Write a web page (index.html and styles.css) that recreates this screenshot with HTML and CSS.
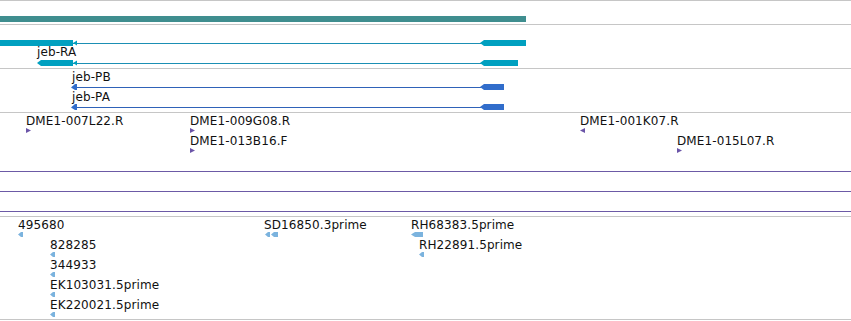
FILE: index.html
```html
<!DOCTYPE html>
<html>
<head>
    <title>jeb region</title>
    <link rel="stylesheet" href="styles.css">
</head>
<body>
    <div class="tracks">
        <!-- Gene span -->
        <div class="track track-gene">
            <svg class="glyphs" width="851" height="23">
                <rect x="0" y="15" width="526" height="6" fill="#3f8e8f"/>
            </svg>
        </div>

        <!-- Transcripts -->
        <div class="track track-tx">
            <svg class="glyphs" width="851" height="43">
                <!-- jeb-RA (upper) -->
                <rect x="0" y="15" width="73" height="6" class="tx-fill"/>
                <line x1="73" y1="18.5" x2="481" y2="18.5" class="tx-line"/>
                <polygon points="73,18 77,15.5 77,20.5" class="tx-fill"/>
                <polygon points="480,18 484,15 526,15 526,21 484,21" class="tx-fill"/>
                <!-- jeb-RA (lower) -->
                <polygon points="37,38 41,35 73,35 73,41 41,41" class="tx-fill"/>
                <line x1="73" y1="38.5" x2="481" y2="38.5" class="tx-line"/>
                <polygon points="73,38 77,35.5 77,40.5" class="tx-fill"/>
                <polygon points="480,38 484,35 518,35 518,41 484,41" class="tx-fill"/>
            </svg>
            <div class="label" style="left:37px;top:20px">jeb-RA</div>
        </div>

        <!-- Proteins -->
        <div class="track track-pep">
            <svg class="glyphs" width="851" height="43">
                <line x1="76" y1="18.5" x2="481" y2="18.5" class="pep-line"/>
                <polygon points="71,18.5 75,15 77,15 77,21 75,21" class="pep-fill"/>
                <polygon points="480,18 484,15 504,15 504,21 484,21" class="pep-fill"/>
                <line x1="76" y1="38.5" x2="481" y2="38.5" class="pep-line"/>
                <polygon points="71,38.5 75,35 77,35 77,41 75,41" class="pep-fill"/>
                <polygon points="480,38 484,35 504,35 504,41 484,41" class="pep-fill"/>
            </svg>
            <div class="label" style="left:72px;top:1px">jeb-PB</div>
            <div class="label" style="left:72px;top:21px">jeb-PA</div>
        </div>

        <!-- BAC ends -->
        <div class="track track-bac">
            <svg class="glyphs" width="851" height="103">
                <polygon points="26,15 31,17.5 26,20" class="bac-fill"/>
                <polygon points="190,15 195,17.5 190,20" class="bac-fill"/>
                <polygon points="190,35 195,37.5 190,40" class="bac-fill"/>
                <polygon points="585,15 580,17.5 585,20" class="bac-fill"/>
                <polygon points="677,35 682,37.5 677,40" class="bac-fill"/>
                <line x1="0" y1="58.5" x2="851" y2="58.5" class="bac-line"/>
                <line x1="0" y1="78.5" x2="851" y2="78.5" class="bac-line"/>
                <line x1="0" y1="98.5" x2="851" y2="98.5" class="bac-line"/>
            </svg>
            <div class="label" style="left:26px;top:1px">DME1-007L22.R</div>
            <div class="label" style="left:190px;top:1px">DME1-009G08.R</div>
            <div class="label" style="left:190px;top:21px">DME1-013B16.F</div>
            <div class="label" style="left:580px;top:1px">DME1-001K07.R</div>
            <div class="label" style="left:677px;top:21px">DME1-015L07.R</div>
        </div>

        <!-- cDNA / EST -->
        <div class="track track-est">
            <svg class="glyphs" width="851" height="102">
                <polygon points="18,17.5 21,15 23,15 23,20 21,20" class="est-fill"/>
                <polygon points="50,37.5 53,35 55,35 55,40 53,40" class="est-fill"/>
                <polygon points="50,57.5 53,55 55,55 55,60 53,60" class="est-fill"/>
                <polygon points="50,77.5 53,75 55,75 55,80 53,80" class="est-fill"/>
                <polygon points="50,97.5 53,95 55,95 55,100 53,100" class="est-fill"/>
                <polygon points="265,17.5 268,15 270,15 270,20 268,20" class="est-fill"/>
                <polygon points="271,17.5 274,15 278,15 278,20 274,20" class="est-fill"/>
                <polygon points="411,17.5 415,15 423,15 423,20 415,20" class="est-fill"/>
                <polygon points="419,37.5 422,35 424,35 424,40 422,40" class="est-fill"/>
            </svg>
            <div class="label" style="left:18px;top:1px">495680</div>
            <div class="label" style="left:50px;top:21px">828285</div>
            <div class="label" style="left:50px;top:41px">344933</div>
            <div class="label" style="left:50px;top:61px">EK103031.5prime</div>
            <div class="label" style="left:50px;top:81px">EK220021.5prime</div>
            <div class="label" style="left:264px;top:1px">SD16850.3prime</div>
            <div class="label" style="left:411px;top:1px">RH68383.5prime</div>
            <div class="label" style="left:419px;top:21px">RH22891.5prime</div>
        </div>
    </div>
</body>
</html>
```

FILE: styles.css
```css
:root {
    --rule: #c6c6c6;
    --tx: #00a0c0;
    --tx-line: #1b8fb4;
    --pep: #316dcb;
    --pep-line: #2f62b8;
    --bac: #6b55a8;
    --bac-line: #6c5aa6;
    --est: #7bb3de;
}

body {
    margin: 0;
    width: 851px;
    height: 321px;
    overflow: hidden;
    background: #fff;
    font-family: 'DejaVu Sans', sans-serif;
}

.tracks {
    border-top: 1px solid var(--rule);
}

.track {
    position: relative;
    border-bottom: 1px solid var(--rule);
}

.track-gene { height: 23px; }
.track-tx   { height: 43px; }
.track-pep  { height: 43px; }
.track-bac  { height: 103px; }
.track-est  { height: 102px; }

.glyphs {
    position: absolute;
    left: 0;
    top: 0;
    display: block;
}

.label {
    position: absolute;
    font-size: 12px;
    line-height: 14px;
    letter-spacing: 0.1px;
    color: #111;
    white-space: nowrap;
}

.tx-fill { fill: var(--tx); }
.tx-line { stroke: var(--tx-line); stroke-width: 1; }

.pep-fill { fill: var(--pep); }
.pep-line { stroke: var(--pep-line); stroke-width: 1; }

.bac-fill { fill: var(--bac); }
.bac-line { stroke: var(--bac-line); stroke-width: 1; }

.est-fill { fill: var(--est); }
```
